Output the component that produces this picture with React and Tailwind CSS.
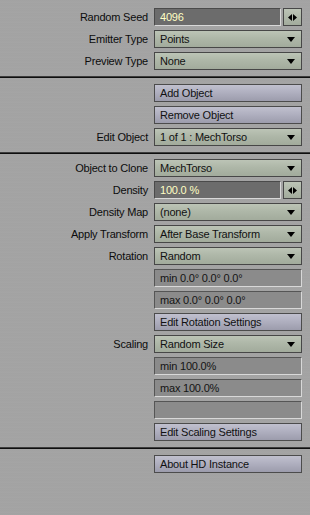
import React from "react";

const Label = ({ children }) => (
  <div className="w-[148px] shrink-0 text-right pr-0 leading-[18px] text-[#0c0c0c]">
    {children}
  </div>
);

const Row = ({ label, children }) => (
  <div className="flex h-[18px] items-center gap-[6px]">
    <Label>{label}</Label>
    <div className="flex h-[18px] w-[148px]">{children}</div>
  </div>
);

const Select = ({ value }) => (
  <div className="flex h-[18px] w-full items-center justify-between border border-[#474747] bg-[linear-gradient(180deg,#bcc4b6_0%,#aeb7a8_45%,#a2ab9c_100%)] pl-[5px] pr-[6px] text-[#111]">
    <span className="leading-[16px]">{value}</span>
    <svg width="8" height="5" viewBox="0 0 8 5">
      <path d="M0 0H8L4 5Z" fill="#000" />
    </svg>
  </div>
);

const Button = ({ children }) => (
  <div className="flex h-[18px] w-full items-center border border-[#4c4c4c] bg-[linear-gradient(180deg,#c0c0ce_0%,#b0b0c0_45%,#9c9cac_100%)] pl-[5px] text-[#111]">
    <span className="leading-[16px]">{children}</span>
  </div>
);

const Field = ({ children, dark, narrow }) => (
  <div
    className={
      dark
        ? "flex h-[18px] w-[127px] items-center border border-t-[#4a4a4a] border-l-[#4a4a4a] border-r-[#d8d8d8] border-b-[#d8d8d8] bg-[#6c6c6c] pl-[5px] text-[#ffffc4]"
        : "flex h-[18px] w-full items-center border border-t-[#555] border-l-[#555] border-r-[#d8d8d8] border-b-[#d8d8d8] bg-[#8b8b8b] pl-[5px] text-[#141414]"
    }
  >
    <span className="leading-[16px]">{children}</span>
  </div>
);

const Spinner = () => (
  <div className="ml-[2px] flex h-[18px] w-[19px] items-center justify-center border border-[#474747] bg-[linear-gradient(180deg,#bcc4b6_0%,#a2ab9c_100%)]">
    <svg width="9" height="7" viewBox="0 0 9 7">
      <path d="M0 3.5L4 0V7Z M5 0L9 3.5L5 7Z" fill="#000" />
    </svg>
  </div>
);

const Separator = ({ mb }) => (
  <div className={`-mx-0 mt-[2px] ${mb} h-[2px] w-[310px] border-t border-t-[#3c3c3c] border-b border-b-[#0e0e0e]`} />
);

export default function App() {
  return (
    <div className="h-[515px] w-[310px] overflow-hidden bg-[#a3a3a3] bg-[repeating-linear-gradient(180deg,#a5a5a5_0px,#a0a0a0_1px,#a7a7a7_2px,#a2a2a2_3px,#a4a4a4_5px)] pt-[8px] font-['Liberation_Sans',Arial,sans-serif] text-[11px] tracking-[-0.2px]">
      <div className="flex flex-col gap-[4px]">
        <Row label="Random Seed">
          <Field dark>4096</Field>
          <Spinner />
        </Row>
        <Row label="Emitter Type">
          <Select value="Points" />
        </Row>
        <Row label="Preview Type">
          <Select value="None" />
        </Row>
        <Separator mb="mb-[2px]" />
        <Row label="">
          <Button>Add Object</Button>
        </Row>
        <Row label="">
          <Button>Remove Object</Button>
        </Row>
        <Row label="Edit Object">
          <Select value="1 of 1 : MechTorso" />
        </Row>
        <Separator mb="mb-[1px]" />
        <Row label="Object to Clone">
          <Select value="MechTorso" />
        </Row>
        <Row label="Density">
          <Field dark>100.0 %</Field>
          <Spinner />
        </Row>
        <Row label="Density Map">
          <Select value="(none)" />
        </Row>
        <Row label="Apply Transform">
          <Select value="After Base Transform" />
        </Row>
        <Row label="Rotation">
          <Select value="Random" />
        </Row>
        <Row label="">
          <Field>min 0.0° 0.0° 0.0°</Field>
        </Row>
        <Row label="">
          <Field>max 0.0° 0.0° 0.0°</Field>
        </Row>
        <Row label="">
          <Button>Edit Rotation Settings</Button>
        </Row>
        <Row label="Scaling">
          <Select value="Random Size" />
        </Row>
        <Row label="">
          <Field>min 100.0%</Field>
        </Row>
        <Row label="">
          <Field>max 100.0%</Field>
        </Row>
        <Row label="">
          <Field />
        </Row>
        <Row label="">
          <Button>Edit Scaling Settings</Button>
        </Row>
        <Separator mb="mb-[2px]" />
        <Row label="">
          <Button>About HD Instance</Button>
        </Row>
      </div>
    </div>
  );
}
